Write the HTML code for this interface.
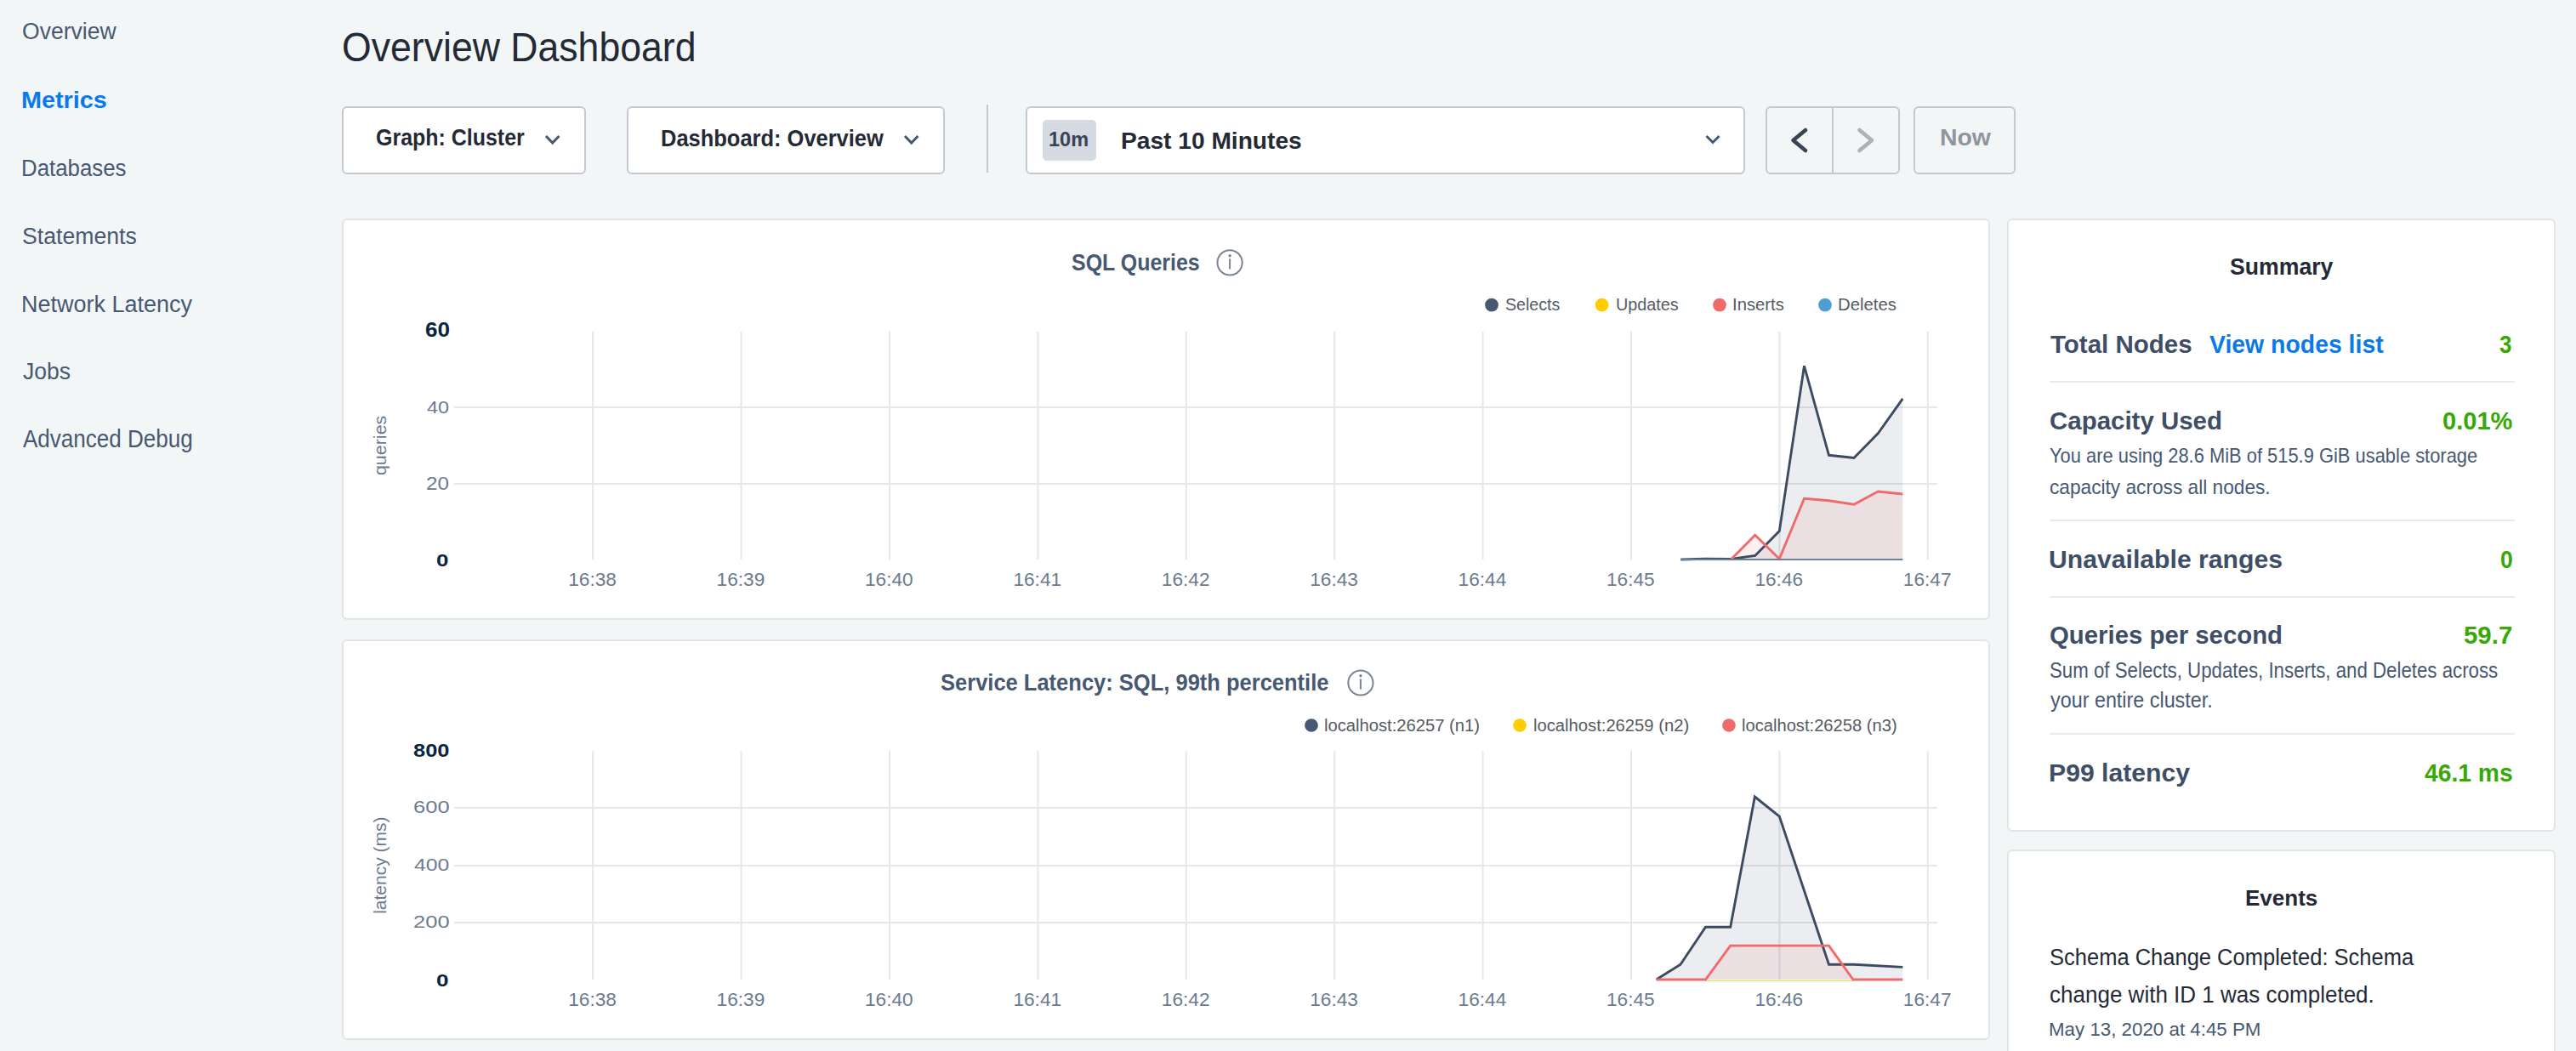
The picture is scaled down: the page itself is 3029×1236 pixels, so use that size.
<!DOCTYPE html>
<html><head><meta charset="utf-8"><style>
html,body{margin:0;padding:0;width:3029px;height:1236px;overflow:hidden;background:#f3f6f7;font-family:"Liberation Sans",sans-serif;}
.t{position:absolute;white-space:pre;transform-origin:0 0;font-family:"Liberation Sans",sans-serif;}
.box{position:absolute;box-sizing:border-box;}
</style></head><body>
<div class="box" style="left:402px;top:125px;width:287px;height:80px;background:#fff;border:2px solid #c3c8d1;border-radius:6px"></div>
<div class="box" style="left:737px;top:125px;width:374px;height:80px;background:#fff;border:2px solid #c3c8d1;border-radius:6px"></div>
<div class="box" style="left:1160px;top:123px;width:2px;height:80px;background:#c3c8d1"></div>
<div class="box" style="left:1206px;top:125px;width:846px;height:80px;background:#fff;border:2px solid #c3c8d1;border-radius:6px"></div>
<div class="box" style="left:1226px;top:141px;width:63px;height:48px;background:#d5dae3;border-radius:5px"></div>
<div class="box" style="left:2076px;top:125px;width:158px;height:80px;border:2px solid #c3c8d1;border-radius:6px"></div>
<div class="box" style="left:2154px;top:125px;width:2px;height:80px;background:#c3c8d1"></div>
<div class="box" style="left:2250px;top:125px;width:120px;height:80px;border:2px solid #c3c8d1;border-radius:6px"></div>
<div class="box" style="left:402px;top:257px;width:1938px;height:472px;background:#fff;border:2px solid #e3e4e6;border-radius:6px"></div>
<div class="box" style="left:402px;top:752px;width:1938px;height:471px;background:#fff;border:2px solid #e3e4e6;border-radius:6px"></div>
<div class="box" style="left:2360px;top:257px;width:645px;height:721px;background:#fff;border:2px solid #e3e4e6;border-radius:6px"></div>
<div class="box" style="left:2360px;top:999px;width:645px;height:300px;background:#fff;border:2px solid #e3e4e6;border-radius:6px"></div>
<div class="box" style="left:2410px;top:448px;width:547px;height:2px;background:#e7eaee"></div>
<div class="box" style="left:2410px;top:611px;width:547px;height:2px;background:#e7eaee"></div>
<div class="box" style="left:2410px;top:701px;width:547px;height:2px;background:#e7eaee"></div>
<div class="box" style="left:2410px;top:862px;width:547px;height:2px;background:#e7eaee"></div>
<svg width="3029" height="1236" style="position:absolute;left:0;top:0">
<line x1="534" y1="479" x2="2278" y2="479" stroke="#e5e7ea" stroke-width="2"/>
<line x1="534" y1="569" x2="2278" y2="569" stroke="#e5e7ea" stroke-width="2"/>
<line x1="697.2" y1="390" x2="697.2" y2="658" stroke="#e5e7ea" stroke-width="2"/>
<line x1="871.6" y1="390" x2="871.6" y2="658" stroke="#e5e7ea" stroke-width="2"/>
<line x1="1046.0" y1="390" x2="1046.0" y2="658" stroke="#e5e7ea" stroke-width="2"/>
<line x1="1220.4" y1="390" x2="1220.4" y2="658" stroke="#e5e7ea" stroke-width="2"/>
<line x1="1394.8000000000002" y1="390" x2="1394.8000000000002" y2="658" stroke="#e5e7ea" stroke-width="2"/>
<line x1="1569.2" y1="390" x2="1569.2" y2="658" stroke="#e5e7ea" stroke-width="2"/>
<line x1="1743.6000000000001" y1="390" x2="1743.6000000000001" y2="658" stroke="#e5e7ea" stroke-width="2"/>
<line x1="1918.0" y1="390" x2="1918.0" y2="658" stroke="#e5e7ea" stroke-width="2"/>
<line x1="2092.4" y1="390" x2="2092.4" y2="658" stroke="#e5e7ea" stroke-width="2"/>
<line x1="2266.8" y1="390" x2="2266.8" y2="658" stroke="#e5e7ea" stroke-width="2"/>
<line x1="534" y1="950" x2="2278" y2="950" stroke="#e5e7ea" stroke-width="2"/>
<line x1="534" y1="1018" x2="2278" y2="1018" stroke="#e5e7ea" stroke-width="2"/>
<line x1="534" y1="1085" x2="2278" y2="1085" stroke="#e5e7ea" stroke-width="2"/>
<line x1="697.2" y1="883" x2="697.2" y2="1152" stroke="#e5e7ea" stroke-width="2"/>
<line x1="871.6" y1="883" x2="871.6" y2="1152" stroke="#e5e7ea" stroke-width="2"/>
<line x1="1046.0" y1="883" x2="1046.0" y2="1152" stroke="#e5e7ea" stroke-width="2"/>
<line x1="1220.4" y1="883" x2="1220.4" y2="1152" stroke="#e5e7ea" stroke-width="2"/>
<line x1="1394.8000000000002" y1="883" x2="1394.8000000000002" y2="1152" stroke="#e5e7ea" stroke-width="2"/>
<line x1="1569.2" y1="883" x2="1569.2" y2="1152" stroke="#e5e7ea" stroke-width="2"/>
<line x1="1743.6000000000001" y1="883" x2="1743.6000000000001" y2="1152" stroke="#e5e7ea" stroke-width="2"/>
<line x1="1918.0" y1="883" x2="1918.0" y2="1152" stroke="#e5e7ea" stroke-width="2"/>
<line x1="2092.4" y1="883" x2="2092.4" y2="1152" stroke="#e5e7ea" stroke-width="2"/>
<line x1="2266.8" y1="883" x2="2266.8" y2="1152" stroke="#e5e7ea" stroke-width="2"/>
<polygon points="1976.3,658.0 2004.9,657.2 2035.3,657.4 2063.7,653.5 2092.3,624.6 2121.5,430.3 2150.5,535.3 2180.0,538.4 2208.4,509.5 2237.3,468.9 2237.3,658.0 1976.3,658.0" fill="rgba(71,88,114,0.11)"/><polygon points="2035.3,658.0 2063.7,629.2 2092.3,657.2 2121.5,586.2 2150.5,588.7 2180.0,593.2 2208.4,578.0 2237.3,581.0 2237.3,658.0 2035.3,658.0" fill="rgba(241,105,105,0.10)"/>
<polyline points="1976.3,658.0 2004.9,657.2 2035.3,657.4 2063.7,653.5 2092.3,624.6 2121.5,430.3 2150.5,535.3 2180.0,538.4 2208.4,509.5 2237.3,468.9" fill="none" stroke="#3d4b60" stroke-width="2.9" stroke-linejoin="miter"/><polyline points="2035.3,658.0 2063.7,629.2 2092.3,657.2 2121.5,586.2 2150.5,588.7 2180.0,593.2 2208.4,578.0 2237.3,581.0" fill="none" stroke="#ef6a6a" stroke-width="2.9" stroke-linejoin="miter"/>
<line x1="1976.3" y1="658" x2="2237.3" y2="658" stroke="#6a8294" stroke-width="2.2"/>
<polygon points="1947.6,1152.0 1976.0,1134.3 2005.5,1090.2 2034.7,1090.2 2063.4,937.0 2092.3,960.1 2150.5,1134.3 2180.0,1134.3 2237.3,1137.4 2237.3,1152.0 1947.6,1152.0" fill="rgba(71,88,114,0.11)"/><polygon points="1947.6,1152.0 2005.5,1152.0 2034.7,1112.1 2150.5,1112.1 2179.0,1152.0 2237.3,1152.0 2237.3,1152.0 1947.6,1152.0" fill="rgba(241,105,105,0.10)"/>
<line x1="2005.5" y1="1153.5" x2="2179" y2="1153.5" stroke="#ffcd02" stroke-width="1.2" opacity="0.8"/>
<polyline points="1947.6,1152.0 1976.0,1134.3 2005.5,1090.2 2034.7,1090.2 2063.4,937.0 2092.3,960.1 2150.5,1134.3 2180.0,1134.3 2237.3,1137.4" fill="none" stroke="#3d4b60" stroke-width="2.9" stroke-linejoin="miter"/><polyline points="1947.6,1152.0 2005.5,1152.0 2034.7,1112.1 2150.5,1112.1 2179.0,1152.0 2237.3,1152.0" fill="none" stroke="#ef6a6a" stroke-width="2.9" stroke-linejoin="miter"/>
<circle cx="1446.1" cy="308.9" r="14.6" fill="none" stroke="#7c8594" stroke-width="2"/><circle cx="1446.1" cy="300.7" r="1.7" fill="#7c8594"/><line x1="1446.1" y1="304.29999999999995" x2="1446.1" y2="316.5" stroke="#7c8594" stroke-width="2"/>
<circle cx="1599.9" cy="803" r="14.6" fill="none" stroke="#7c8594" stroke-width="2"/><circle cx="1599.9" cy="794.8" r="1.7" fill="#7c8594"/><line x1="1599.9" y1="798.4" x2="1599.9" y2="810.6" stroke="#7c8594" stroke-width="2"/>
<circle cx="1754" cy="358.6" r="7.85" fill="#475872"/>
<circle cx="1883.6" cy="358.6" r="7.85" fill="#ffcd02"/>
<circle cx="2022" cy="358.6" r="7.85" fill="#ef6a6a"/>
<circle cx="2146" cy="358.6" r="7.85" fill="#4e9fd1"/>
<circle cx="1542" cy="853" r="7.85" fill="#475872"/>
<circle cx="1787" cy="853" r="7.85" fill="#ffcd02"/>
<circle cx="2033" cy="853" r="7.85" fill="#ef6a6a"/>
<polyline points="642,160 649.7,168 657.4,160" fill="none" stroke="#475872" stroke-width="3"/>
<polyline points="1064,160 1071.7,168 1079.4,160" fill="none" stroke="#475872" stroke-width="3"/>
<polyline points="2006.5,160 2014,167.5 2021.5,160" fill="none" stroke="#475872" stroke-width="3"/>
<polyline points="2123,153 2108.5,165 2123,177" fill="none" stroke="#394455" stroke-width="4.6" stroke-linecap="round" stroke-linejoin="round"/>
<polyline points="2186.5,153 2201,165 2186.5,177" fill="none" stroke="#adb1b8" stroke-width="4.6" stroke-linecap="round" stroke-linejoin="round"/>
<text x="0" y="0" transform="translate(454,523.9) rotate(-90)" text-anchor="middle" font-family="Liberation Sans" font-size="21" textLength="70.4" lengthAdjust="spacingAndGlyphs" fill="#6b7b8f">queries</text>
<text x="0" y="0" transform="translate(454,1017.7) rotate(-90)" text-anchor="middle" font-family="Liberation Sans" font-size="21" fill="#6b7b8f">latency (ms)</text>
</svg>
<div class="t" style="left:26.04px;top:23.22px;font-size:27.62px;line-height:27.62px;font-weight:400;color:#475872;transform:scaleX(0.9614);">Overview</div>
<div class="t" style="left:25.13px;top:183.62px;font-size:27.62px;line-height:27.62px;font-weight:400;color:#475872;transform:scaleX(0.9349);">Databases</div>
<div class="t" style="left:26.03px;top:263.62px;font-size:27.62px;line-height:27.62px;font-weight:400;color:#475872;transform:scaleX(0.9652);">Statements</div>
<div class="t" style="left:25.10px;top:343.00px;font-size:28.34px;line-height:28.34px;font-weight:400;color:#475872;transform:scaleX(0.9522);">Network Latency</div>
<div class="t" style="left:27.00px;top:423.25px;font-size:28.05px;line-height:28.05px;font-weight:400;color:#475872;transform:scaleX(0.9431);">Jobs</div>
<div class="t" style="left:27.00px;top:502.39px;font-size:29.07px;line-height:29.07px;font-weight:400;color:#475872;transform:scaleX(0.8959);">Advanced Debug</div>
<div class="t" style="left:24.97px;top:103.00px;font-size:28.34px;line-height:28.34px;font-weight:700;color:#0a7ae8;transform:scaleX(1.0167);">Metrics</div>
<div class="t" style="left:401.83px;top:32.43px;font-size:47.68px;line-height:47.68px;font-weight:400;color:#242a35;transform:scaleX(0.9357);">Overview Dashboard</div>
<div class="t" style="left:442.08px;top:148.91px;font-size:27.04px;line-height:27.04px;font-weight:700;color:#242a35;transform:scaleX(0.9234);">Graph: Cluster</div>
<div class="t" style="left:776.54px;top:148.86px;font-size:27.33px;line-height:27.33px;font-weight:700;color:#242a35;transform:scaleX(0.9319);">Dashboard: Overview</div>
<div class="t" style="left:1233.49px;top:153.31px;font-size:23.26px;line-height:23.26px;font-weight:700;color:#394455;transform:scaleX(1.0114);">10m</div>
<div class="t" style="left:1317.96px;top:151.62px;font-size:27.62px;line-height:27.62px;font-weight:700;color:#242a35;transform:scaleX(1.0194);">Past 10 Minutes</div>
<div class="t" style="left:2280.76px;top:148.37px;font-size:27.91px;line-height:27.91px;font-weight:700;color:#8f959f;transform:scaleX(1.0175);">Now</div>
<div class="t" style="left:1259.77px;top:296.06px;font-size:26.74px;line-height:26.74px;font-weight:700;color:#475872;transform:scaleX(0.9333);">SQL Queries</div>
<div class="t" style="left:1770.43px;top:348.49px;font-size:20.20px;line-height:20.20px;font-weight:400;color:#555b63;transform:scaleX(0.9723);">Selects</div>
<div class="t" style="left:1899.62px;top:348.49px;font-size:20.20px;line-height:20.20px;font-weight:400;color:#555b63;transform:scaleX(0.9811);">Updates</div>
<div class="t" style="left:2036.79px;top:348.49px;font-size:20.20px;line-height:20.20px;font-weight:400;color:#555b63;transform:scaleX(1.0034);">Inserts</div>
<div class="t" style="left:2160.59px;top:348.49px;font-size:20.20px;line-height:20.20px;font-weight:400;color:#555b63;transform:scaleX(1.0061);">Deletes</div>
<div class="t" style="left:499.69px;top:377.46px;font-size:23.55px;line-height:23.55px;font-weight:700;color:#0a2540;transform:scaleX(1.1083);">60</div>
<div class="t" style="left:502.40px;top:469.10px;font-size:20.79px;line-height:20.79px;font-weight:400;color:#6b7b8f;transform:scaleX(1.1273);">40</div>
<div class="t" style="left:501.27px;top:558.79px;font-size:21.51px;line-height:21.51px;font-weight:400;color:#6b7b8f;transform:scaleX(1.1273);">20</div>
<div class="t" style="left:513.23px;top:649.25px;font-size:20.49px;line-height:20.49px;font-weight:700;color:#0a2540;transform:scaleX(1.2700);">0</div>
<div class="t" style="left:668.20px;top:669.70px;font-size:22.67px;line-height:22.67px;font-weight:400;color:#6b7b8f;">16:38</div>
<div class="t" style="left:842.60px;top:669.70px;font-size:22.67px;line-height:22.67px;font-weight:400;color:#6b7b8f;">16:39</div>
<div class="t" style="left:1017.00px;top:669.70px;font-size:22.67px;line-height:22.67px;font-weight:400;color:#6b7b8f;">16:40</div>
<div class="t" style="left:1191.40px;top:669.70px;font-size:22.67px;line-height:22.67px;font-weight:400;color:#6b7b8f;">16:41</div>
<div class="t" style="left:1365.80px;top:669.70px;font-size:22.67px;line-height:22.67px;font-weight:400;color:#6b7b8f;">16:42</div>
<div class="t" style="left:1540.20px;top:669.70px;font-size:22.67px;line-height:22.67px;font-weight:400;color:#6b7b8f;">16:43</div>
<div class="t" style="left:1714.60px;top:669.70px;font-size:22.67px;line-height:22.67px;font-weight:400;color:#6b7b8f;">16:44</div>
<div class="t" style="left:1889.00px;top:669.70px;font-size:22.67px;line-height:22.67px;font-weight:400;color:#6b7b8f;">16:45</div>
<div class="t" style="left:2063.40px;top:669.70px;font-size:22.67px;line-height:22.67px;font-weight:400;color:#6b7b8f;">16:46</div>
<div class="t" style="left:2237.80px;top:669.70px;font-size:22.67px;line-height:22.67px;font-weight:400;color:#6b7b8f;">16:47</div>
<div class="t" style="left:1106.15px;top:789.66px;font-size:26.74px;line-height:26.74px;font-weight:700;color:#475872;transform:scaleX(0.9541);">Service Latency: SQL, 99th percentile</div>
<div class="t" style="left:1557.31px;top:842.77px;font-size:20.35px;line-height:20.35px;font-weight:400;color:#555b63;transform:scaleX(0.9929);">localhost:26257 (n1)</div>
<div class="t" style="left:1802.91px;top:842.77px;font-size:20.35px;line-height:20.35px;font-weight:400;color:#555b63;transform:scaleX(0.9934);">localhost:26259 (n2)</div>
<div class="t" style="left:2048.01px;top:842.77px;font-size:20.35px;line-height:20.35px;font-weight:400;color:#555b63;transform:scaleX(0.9907);">localhost:26258 (n3)</div>
<div class="t" style="left:486.01px;top:872.79px;font-size:21.51px;line-height:21.51px;font-weight:700;color:#0a2540;transform:scaleX(1.1853);">800</div>
<div class="t" style="left:485.98px;top:939.38px;font-size:20.93px;line-height:20.93px;font-weight:400;color:#6b7b8f;transform:scaleX(1.2212);">600</div>
<div class="t" style="left:487.20px;top:1007.08px;font-size:20.93px;line-height:20.93px;font-weight:400;color:#6b7b8f;transform:scaleX(1.1853);">400</div>
<div class="t" style="left:485.98px;top:1074.48px;font-size:20.93px;line-height:20.93px;font-weight:400;color:#6b7b8f;transform:scaleX(1.2212);">200</div>
<div class="t" style="left:513.23px;top:1142.82px;font-size:20.64px;line-height:20.64px;font-weight:700;color:#0a2540;transform:scaleX(1.2700);">0</div>
<div class="t" style="left:668.20px;top:1163.90px;font-size:22.67px;line-height:22.67px;font-weight:400;color:#6b7b8f;">16:38</div>
<div class="t" style="left:842.60px;top:1163.90px;font-size:22.67px;line-height:22.67px;font-weight:400;color:#6b7b8f;">16:39</div>
<div class="t" style="left:1017.00px;top:1163.90px;font-size:22.67px;line-height:22.67px;font-weight:400;color:#6b7b8f;">16:40</div>
<div class="t" style="left:1191.40px;top:1163.90px;font-size:22.67px;line-height:22.67px;font-weight:400;color:#6b7b8f;">16:41</div>
<div class="t" style="left:1365.80px;top:1163.90px;font-size:22.67px;line-height:22.67px;font-weight:400;color:#6b7b8f;">16:42</div>
<div class="t" style="left:1540.20px;top:1163.90px;font-size:22.67px;line-height:22.67px;font-weight:400;color:#6b7b8f;">16:43</div>
<div class="t" style="left:1714.60px;top:1163.90px;font-size:22.67px;line-height:22.67px;font-weight:400;color:#6b7b8f;">16:44</div>
<div class="t" style="left:1889.00px;top:1163.90px;font-size:22.67px;line-height:22.67px;font-weight:400;color:#6b7b8f;">16:45</div>
<div class="t" style="left:2063.40px;top:1163.90px;font-size:22.67px;line-height:22.67px;font-weight:400;color:#6b7b8f;">16:46</div>
<div class="t" style="left:2237.80px;top:1163.90px;font-size:22.67px;line-height:22.67px;font-weight:400;color:#6b7b8f;">16:47</div>
<div class="t" style="left:2621.63px;top:300.06px;font-size:27.33px;line-height:27.33px;font-weight:700;color:#242a35;transform:scaleX(0.9748);">Summary</div>
<div class="t" style="left:2410.90px;top:390.05px;font-size:29.94px;line-height:29.94px;font-weight:700;color:#3e4e66;transform:scaleX(0.9851);">Total Nodes</div>
<div class="t" style="left:2597.60px;top:390.05px;font-size:29.94px;line-height:29.94px;font-weight:700;color:#0a7ae8;transform:scaleX(0.9486);">View nodes list</div>
<div class="t" style="left:2939.33px;top:390.05px;font-size:29.94px;line-height:29.94px;font-weight:700;color:#37a806;transform:scaleX(0.8667);">3</div>
<div class="t" style="left:2409.88px;top:481.01px;font-size:28.92px;line-height:28.92px;font-weight:700;color:#3e4e66;transform:scaleX(1.0189);">Capacity Used</div>
<div class="t" style="left:2872.39px;top:481.01px;font-size:28.92px;line-height:28.92px;font-weight:700;color:#37a806;transform:scaleX(1.0063);">0.01%</div>
<div class="t" style="left:2410.06px;top:525.09px;font-size:23.40px;line-height:23.40px;font-weight:400;color:#475872;transform:scaleX(0.9362);">You are using 28.6 MiB of 515.9 GiB usable storage</div>
<div class="t" style="left:2410.03px;top:561.69px;font-size:23.40px;line-height:23.40px;font-weight:400;color:#475872;transform:scaleX(0.9694);">capacity across all nodes.</div>
<div class="t" style="left:2409.21px;top:642.28px;font-size:30.38px;line-height:30.38px;font-weight:700;color:#3e4e66;transform:scaleX(0.9934);">Unavailable ranges</div>
<div class="t" style="left:2939.63px;top:642.28px;font-size:30.38px;line-height:30.38px;font-weight:700;color:#37a806;transform:scaleX(0.8733);">0</div>
<div class="t" style="left:2410.18px;top:733.13px;font-size:28.78px;line-height:28.78px;font-weight:700;color:#3e4e66;transform:scaleX(1.0203);">Queries per second</div>
<div class="t" style="left:2897.38px;top:733.13px;font-size:28.78px;line-height:28.78px;font-weight:700;color:#37a806;transform:scaleX(1.0222);">59.7</div>
<div class="t" style="left:2410.11px;top:776.33px;font-size:25.00px;line-height:25.00px;font-weight:400;color:#475872;transform:scaleX(0.8907);">Sum of Selects, Updates, Inserts, and Deletes across</div>
<div class="t" style="left:2411.00px;top:811.33px;font-size:25.00px;line-height:25.00px;font-weight:400;color:#475872;transform:scaleX(0.9337);">your entire cluster.</div>
<div class="t" style="left:2409.15px;top:894.32px;font-size:29.51px;line-height:29.51px;font-weight:700;color:#3e4e66;transform:scaleX(1.0231);">P99 latency</div>
<div class="t" style="left:2851.20px;top:894.32px;font-size:29.51px;line-height:29.51px;font-weight:700;color:#37a806;transform:scaleX(0.9570);">46.1 ms</div>
<div class="t" style="left:2639.72px;top:1042.73px;font-size:26.31px;line-height:26.31px;font-weight:700;color:#242a35;transform:scaleX(0.9892);">Events</div>
<div class="t" style="left:2409.96px;top:1112.09px;font-size:27.18px;line-height:27.18px;font-weight:400;color:#242a35;transform:scaleX(0.9387);">Schema Change Completed: Schema</div>
<div class="t" style="left:2409.94px;top:1156.29px;font-size:27.18px;line-height:27.18px;font-weight:400;color:#242a35;transform:scaleX(0.9576);">change with ID 1 was completed.</div>
<div class="t" style="left:2409.02px;top:1199.72px;font-size:22.53px;line-height:22.53px;font-weight:400;color:#475872;transform:scaleX(0.9915);">May 13, 2020 at 4:45 PM</div>
</body></html>
